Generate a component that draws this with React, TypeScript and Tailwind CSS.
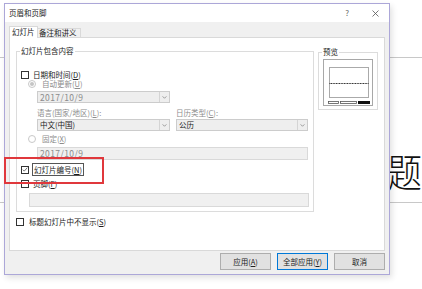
import React from "react";

const Check = ({ checked }: { checked?: boolean }) => (
  <span className="w-[8px] h-[8px] border border-[#333333] bg-white flex items-center justify-center shrink-0">
    {checked && (
      <svg viewBox="0 0 8 8" className="w-[7px] h-[7px]">
        <path d="M1 4.2 L3 6.2 L7 1.6" stroke="#333" fill="none" strokeWidth="0.9" />
      </svg>
    )}
  </span>
);

const Radio = ({ checked }: { checked?: boolean }) => (
  <span className="w-[8px] h-[8px] rounded-full border border-[#c8c8c8] bg-white flex items-center justify-center shrink-0">
    {checked && <span className="w-[4px] h-[4px] rounded-full bg-[#c4c4c4]" />}
  </span>
);

const Combo = ({ text, w, dark, num }: { text: string; w: string; dark?: boolean; num?: boolean }) => (
  <div className={`${w} h-[12px] border border-[#cccccc] bg-[#eeeeee] flex items-center`}>
    <span
      className={`flex-1 pl-[2px] leading-[10px] ${dark ? "text-[#222]" : "text-[#8c8c8c]"} ${
        num ? "text-[8.5px] tracking-[0.4px]" : ""
      }`}
    >
      {text}
    </span>
    <span className="w-[10px] h-[10px] border-l border-[#d4d4d4] flex items-center justify-center">
      <svg viewBox="0 0 6 4" className="w-[5px] h-[3px]">
        <path d="M0.5 0.5 L3 3 L5.5 0.5" stroke="#666" fill="none" strokeWidth="0.8" />
      </svg>
    </span>
  </div>
);

const U = ({ c }: { c: string }) => <span className="underline underline-offset-1">{c}</span>;

export default function App() {
  return (
    <div className="relative w-[422px] h-[289px] bg-white overflow-hidden font-['Noto_Sans_CJK_SC',sans-serif] text-[7.5px] text-[#1a1a1a]">
      {/* background slide bits */}
      <div className="absolute left-0 top-[57px] w-[5px] h-px bg-[#c8c8c8]" />
      <div className="absolute left-0 top-[202px] w-[5px] h-px bg-[#c8c8c8]" />
      <div className="absolute left-[389px] top-[57px] w-[33px] h-px bg-[#c8c8c8]" />
      <div className="absolute left-[389px] top-[202px] w-[33px] h-px bg-[#c8c8c8]" />
      <div className="absolute left-[387px] top-[151px] text-[35px] leading-none font-light text-[#111] scale-y-110 origin-top">题</div>

      {/* dialog window */}
      <div className="absolute left-[4px] top-[3px] w-[386px] h-[272px] border border-[#aca7d8] bg-[#f0f0f0] flex flex-col shadow-[2px_3px_6px_rgba(0,0,0,0.12)]">
        {/* title bar */}
        <div className="h-[18px] bg-white flex items-center pl-[4px] shrink-0">
          <span className="text-[7.5px] text-[#222] leading-none">页眉和页脚</span>
          <span className="ml-auto text-[8px] text-[#666] leading-none">?</span>
          <svg viewBox="0 0 7 7" className="w-[7px] h-[7px] ml-[23px] mr-[10px]">
            <path d="M0.5 0.5 L6.5 6.5 M6.5 0.5 L0.5 6.5" stroke="#555" strokeWidth="0.8" fill="none" />
          </svg>
        </div>

        {/* tabs */}
        <div className="h-[15px] flex items-end pl-[4px] shrink-0">
          <div className="relative z-10 h-[12px] w-[29px] -mb-px bg-white border-t border-l border-r border-[#d9d9d9] pl-[2px] leading-[10px] text-[#222]">
            幻灯片
          </div>
          <div className="h-[9px] w-[43px] border-t border-r border-[#d9d9d9] pl-[1px] leading-[8px] text-[#222]">
            备注和讲义
          </div>
        </div>

        {/* panel */}
        <div className="h-[214px] mx-[4px] border border-[#d9d9d9] bg-white pl-[6px] pt-[13px] shrink-0">
          <div className="flex gap-[4px]">
            {/* main group */}
            <div className="relative w-[298px] border border-[#dcdcdc] pb-[4px]">
              <span className="absolute left-[3px] -top-[6px] bg-white px-px leading-[10px] text-[#222]">幻灯片包含内容</span>

              <div className="mt-[18px] ml-[4px] h-[9px] flex items-center gap-[4px] leading-none">
                <Check />
                <span>日期和时间(<U c="D" />)</span>
              </div>

              <div className="ml-[11px] h-[9px] flex items-center gap-[6px] leading-none text-[#8c8c8c]">
                <Radio checked />
                <span>自动更新(<U c="U" />)</span>
              </div>

              <div className="mt-[3px] ml-[20px]">
                <Combo text="2017/10/9" w="w-[133px]" num />
              </div>

              <div className="mt-[5px] ml-[20px] h-[9px] flex gap-[6px] leading-[9px] text-[#8c8c8c]">
                <span className="w-[133px]">语言(国家/地区)(<U c="L" />):</span>
                <span>日历类型(<U c="C" />):</span>
              </div>

              <div className="mt-[2px] ml-[20px] flex gap-[6px]">
                <Combo text="中文(中国)" w="w-[133px]" dark />
                <Combo text="公历" w="w-[132px]" dark />
              </div>

              <div className="mt-[3px] ml-[11px] h-[9px] flex items-center gap-[6px] leading-none text-[#8c8c8c]">
                <Radio />
                <span>固定(<U c="X" />)</span>
              </div>

              <div className="mt-[4px] ml-[20px] w-[271px] h-[13px] border border-[#d9d9d9] bg-[#f0f0f0] pl-[2px] leading-[11px] text-[8.5px] tracking-[0.4px] text-[#8c8c8c]">
                2017/10/9
              </div>

              <div className="mt-[3px] ml-[4px] h-[13px] flex items-center gap-[3px] leading-none">
                <Check checked />
                <span className="h-[13px] border border-[#555] px-px flex items-center">
                  幻灯片编号(<U c="N" />)
                </span>
              </div>

              <div className="mt-[3px] ml-[4px] h-[9px] flex items-center gap-[4px] leading-none">
                <Check />
                <span>页脚(<U c="F" />)</span>
              </div>

              <div className="mt-[5px] ml-[12px] w-[280px] h-[14px] border border-[#d9d9d9] bg-[#f0f0f0]" />
            </div>

            {/* preview group */}
            <div className="relative mt-px w-[60px] h-[58px] border border-[#dcdcdc]">
              <span className="absolute left-[3px] -top-[6px] bg-white px-px leading-[10px] text-[#222]">预览</span>
              <svg viewBox="0 0 50 47" className="ml-[4px] mt-[6px] w-[50px] h-[47px]">
                <rect x="0.5" y="0.5" width="49" height="46" fill="#fff" stroke="#a8a8a8" strokeWidth="1" />
                <rect x="6.5" y="8.5" width="39" height="30" fill="none" stroke="#555" strokeWidth="1" strokeDasharray="1 1" />
                <line x1="6.5" y1="24.5" x2="45.5" y2="24.5" stroke="#222" strokeWidth="1" strokeDasharray="1 0.6" />
                <rect x="5.5" y="42.5" width="10" height="2" fill="#fff" stroke="#555" strokeWidth="0.8" />
                <rect x="17.5" y="42.5" width="16" height="2" fill="#fff" stroke="#555" strokeWidth="0.8" />
                <rect x="35" y="42" width="12" height="3" fill="#111" />
              </svg>
            </div>
          </div>

          <div className="mt-[5px] h-[9px] flex items-center gap-[5px] leading-none">
            <Check />
            <span>标题幻灯片中不显示(<U c="S" />)</span>
          </div>
        </div>

        {/* buttons */}
        <div className="flex-1 flex justify-end items-start pt-[2px] pr-[4px] gap-[6px]">
          <button className="w-[51px] h-[17px] bg-[#e1e1e1] border border-[#adadad] text-[#222] leading-none">
            应用(<U c="A" />)
          </button>
          <button className="w-[51px] h-[17px] bg-[#e1e1e1] border border-[#0078d7] text-[#222] leading-none">
            全部应用(<U c="Y" />)
          </button>
          <button className="w-[51px] h-[17px] bg-[#e1e1e1] border border-[#adadad] text-[#222] leading-none">
            取消
          </button>
        </div>
      </div>

      {/* red highlight */}
      <div className="absolute left-[4px] top-[157px] w-[100px] h-[27px] border-2 border-solid border-[#e0383c]" />
    </div>
  );
}
